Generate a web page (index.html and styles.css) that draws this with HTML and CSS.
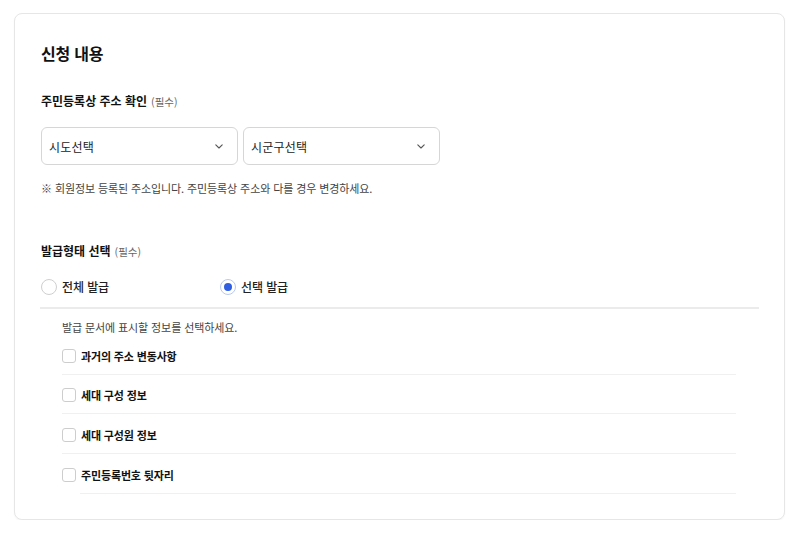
FILE: index.html
```html
<!DOCTYPE html>
<html lang="ko">
<head>
<meta charset="utf-8">
<title>신청 내용</title>
<link rel="stylesheet" href="styles.css">
</head>
<body>
<section class="card">
  <h2 class="title">신청 내용</h2>

  <div class="field">
    <h3 class="label"><span>주민등록상 주소 확인</span><span class="req">(필수)</span></h3>
    <div class="selects">
      <div class="select">
        <span>시도선택</span>
        <svg class="chev" width="8" height="5" viewBox="0 0 8 5"><path d="M0.8 0.8L4 4L7.2 0.8" fill="none" stroke="#555" stroke-width="1.1" stroke-linecap="round" stroke-linejoin="round"/></svg>
      </div>
      <div class="select">
        <span>시군구선택</span>
        <svg class="chev" width="8" height="5" viewBox="0 0 8 5"><path d="M0.8 0.8L4 4L7.2 0.8" fill="none" stroke="#555" stroke-width="1.1" stroke-linecap="round" stroke-linejoin="round"/></svg>
      </div>
    </div>
    <p class="note">※ 회원정보 등록된 주소입니다. 주민등록상 주소와 다를 경우 변경하세요.</p>
  </div>

  <div class="field issue">
    <h3 class="label"><span>발급형태 선택</span><span class="req">(필수)</span></h3>
    <div class="radios">
      <label class="radio"><span class="circle"></span><span>전체 발급</span></label>
      <label class="radio checked"><span class="circle"><span class="dot"></span></span><span>선택 발급</span></label>
    </div>
    <div class="rule-strong"></div>
    <div class="options">
      <p class="hint">발급 문서에 표시할 정보를 선택하세요.</p>
      <ul class="checks">
        <li class="check-item">
          <div class="check-row"><span class="box"></span><span>과거의 주소 변동사항</span></div>
          <div class="rule"></div>
        </li>
        <li class="check-item">
          <div class="check-row"><span class="box"></span><span>세대 구성 정보</span></div>
          <div class="rule"></div>
        </li>
        <li class="check-item">
          <div class="check-row"><span class="box"></span><span>세대 구성원 정보</span></div>
          <div class="rule"></div>
        </li>
        <li class="check-item">
          <div class="check-row"><span class="box"></span><span>주민등록번호 뒷자리</span></div>
          <div class="rule rule-inset"></div>
        </li>
      </ul>
    </div>
  </div>
</section>
</body>
</html>
```

FILE: styles.css
```css
* { box-sizing: border-box; }

html, body {
  margin: 0;
  padding: 0;
  background: #ffffff;
}

body {
  font-family: "Noto Sans CJK KR", "Noto Sans", "Liberation Sans", sans-serif;
  color: #111111;
}

.card {
  margin: 13px 0 0 14px;
  width: 771px;
  height: 507px;
  padding: 28px 25px 24px 26px;
  border: 1px solid #e6e6e6;
  border-radius: 8px;
  box-shadow: 0 1px 2px rgba(0, 0, 0, 0.04);
  background: #fff;
}

.title {
  margin: 0;
  font-size: 16px;
  line-height: 22px;
  font-weight: 700;
  letter-spacing: -0.2px;
  color: #111;
}

.field {
  margin-top: 28px;
}

.label {
  margin: 0;
  height: 18px;
  display: flex;
  align-items: baseline;
  gap: 4px;
  font-size: 12px;
  line-height: 18px;
  font-weight: 700;
  letter-spacing: 0;
  color: #111;
}

.req {
  font-size: 10.5px;
  line-height: 18px;
  font-weight: 400;
  color: #666;
  letter-spacing: 0;
}

.selects {
  display: flex;
  gap: 5px;
  margin-top: 17px;
}

.select {
  width: 197px;
  height: 38px;
  display: flex;
  align-items: center;
  justify-content: space-between;
  padding: 0 14px 0 7px;
  border: 1px solid #d6d6d6;
  border-radius: 6px;
  font-size: 12px;
  letter-spacing: 0.2px;
  color: #222;
}

.chev {
  display: block;
}

.note {
  margin: 15px 0 0;
  font-size: 11px;
  line-height: 16px;
  letter-spacing: -0.1px;
  color: #444;
}

.issue {
  margin-top: 46px;
}

.radios {
  display: flex;
  margin-top: 15px;
  height: 24px;
  align-items: center;
}

.radio {
  width: 179px;
  height: 24px;
  display: flex;
  align-items: center;
  gap: 5px;
  font-size: 12px;
  line-height: 16px;
  font-weight: 500;
  letter-spacing: -0.1px;
  color: #222;
}

.circle {
  width: 16px;
  height: 16px;
  border-radius: 50%;
  border: 1px solid #cfcfcf;
  display: flex;
  align-items: center;
  justify-content: center;
  background: #fff;
  flex: none;
}

.radio.checked .circle {
  border-color: #b9c9ef;
}

.dot {
  width: 8px;
  height: 8px;
  border-radius: 50%;
  background: #2f5fe0;
}

.rule-strong {
  margin: 8px 0 0 -1px;
  height: 2px;
  background: #ebebeb;
}

.options {
  padding-left: 21px;
  margin-right: 23px;
}

.hint {
  margin: 11px 0 0;
  font-size: 11px;
  line-height: 15px;
  letter-spacing: -0.1px;
  color: #444;
}

.checks {
  list-style: none;
  margin: 0;
  padding: 0;
}

.check-row {
  display: flex;
  align-items: center;
  gap: 5px;
  padding: 12.7px 0 10px;
  font-size: 11px;
  line-height: 16px;
  font-weight: 700;
  letter-spacing: -0.15px;
  color: #111;
}

.box {
  width: 14px;
  height: 14px;
  border: 1px solid #cdcdcd;
  border-radius: 3px;
  background: #fff;
  flex: none;
}

.rule {
  height: 1px;
  background: #f0f0f0;
}

.rule-inset {
  margin-left: 18px;
}
```
